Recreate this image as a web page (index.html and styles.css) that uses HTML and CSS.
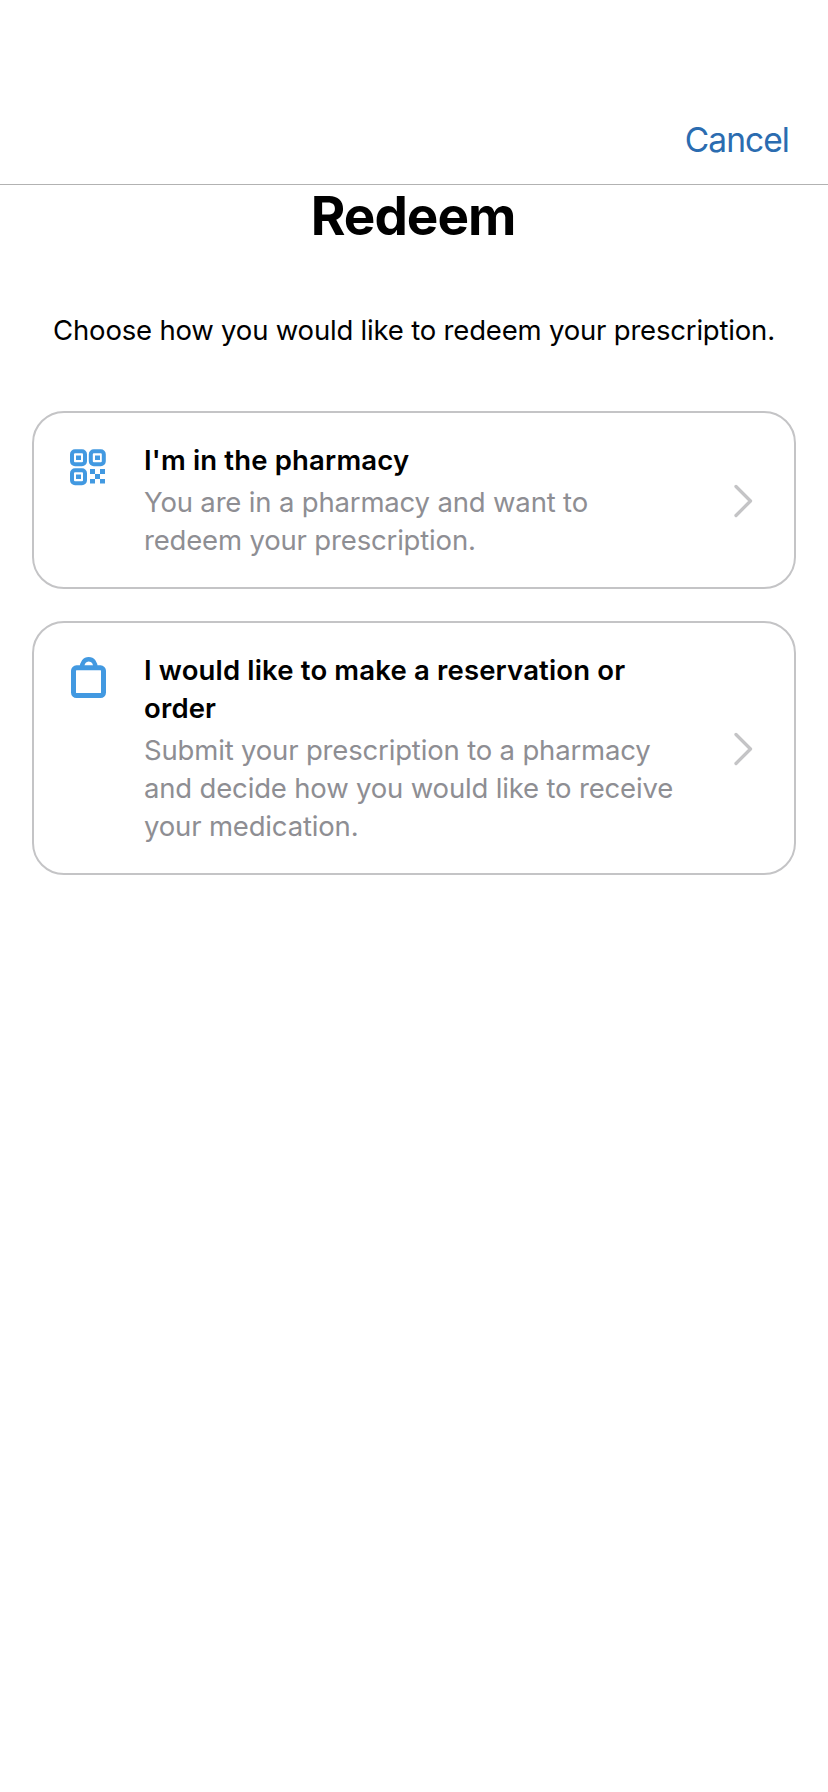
FILE: index.html
```html
<!DOCTYPE html>
<html lang="en">
<head>
<meta charset="utf-8">
<title>Redeem</title>
<link rel="stylesheet" href="styles.css">
</head>
<body>
<header class="navbar"><a class="cancel">Cancel</a></header>
<main class="content">
  <h1 class="heading">Redeem</h1>
  <p class="intro">Choose how you would like to redeem your prescription.</p>
  <section class="card">
    <svg class="icon" viewBox="0 0 40 44" fill="none">
      <g stroke="#4299e1" stroke-width="4">
        <rect x="4" y="-2.700" width="13" height="13" rx="3"/>
        <rect x="22.800" y="-2.700" width="13" height="13" rx="3"/>
        <rect x="4" y="16.200" width="13" height="13" rx="3"/>
      </g>
      <path fill="#4299e1" d="M8 1.500h5v4.500h-5zM27 1.500h5v4.500h-5zM8 20.500h5v4.500h-5zM22 15h5v5h-5zM32 15h5v5h-5zM27 20h5v5h-5zM22 25h5v4.500h-5zM32 25h5v4.500h-5z" />
    </svg>
    <div class="copy">
      <h2 class="title">I'm in the pharmacy</h2>
      <p class="text">You are in a pharmacy and want to<br>redeem your prescription.</p>
    </div>
    <svg class="chevron" viewBox="0 0 20 34"><path d="M3 2.500 17.500 17 3 31.500"/></svg>
  </section>
  <section class="card">
    <svg class="icon" viewBox="0 0 40 44" fill="none" stroke="#4299e1">
      <rect x="5.500" y="3.800" width="30" height="27.700" rx="3" stroke-width="5"/>
      <path d="M14 3.500C14 -1 16.500 -4.800 20.700 -4.800S27.400 -1 27.400 3.500" stroke-width="4.400"/>
    </svg>
    <div class="copy">
      <h2 class="title">I would like to make a reservation or<br>order</h2>
      <p class="text">Submit your prescription to a pharmacy<br>and decide how you would like to receive<br>your medication.</p>
    </div>
    <svg class="chevron" viewBox="0 0 20 34"><path d="M3 2.500 17.500 17 3 31.500"/></svg>
  </section>
</main>
</body>
</html>
```
FILE: styles.css
```css
* { box-sizing: border-box; }
body {
  margin: 0;
  min-height: 1792px;
  background: #fff;
  color: #000;
  font-family: Inter, "Liberation Sans", sans-serif;
}
h1, h2, p { margin: 0; font-size: inherit; white-space: nowrap; }
.navbar {
  display: flex;
  justify-content: flex-end;
  height: 185px;
  padding: 120px 39px 0 0;
  border-bottom: 1px solid #b2b2b2;
}
.cancel { color: #2b6cb0; font-size: 33.5px; line-height: 40px; letter-spacing: -0.95px; }
.content { display: flex; flex-direction: column; padding: 0 32px; }
.heading {
  margin-top: -1px;
  padding-right: 2px;
  font-size: 53px;
  font-weight: 700;
  line-height: 64px;
  letter-spacing: -1px;
  text-align: center;
}
.intro {
  margin: 63px 0 61px;
  font-size: 27.5px;
  line-height: 39px;
  letter-spacing: -0.19px;
  text-align: center;
}
.card {
  display: flex;
  align-items: flex-start;
  margin-bottom: 32px;
  padding: 28px 41px 28px 34px;
  border: 2px solid #c4c4c6;
  border-radius: 32px;
}
.icon { flex: none; width: 40px; height: 44px; overflow: visible; margin-top: 13px; }
.copy { flex: 1; margin-left: 36px; font-size: 27.5px; line-height: 38px; }
.title { font-weight: 600; letter-spacing: 0.16px; }
.text { margin-top: 4px; color: #8e8e93; letter-spacing: -0.17px; }
.chevron { flex: none; align-self: center; width: 20px; height: 34px; margin-top: 2px; }
.chevron path { fill: none; stroke: #c4c4c6; stroke-width: 3.3; stroke-linecap: round; stroke-linejoin: round; }
```
